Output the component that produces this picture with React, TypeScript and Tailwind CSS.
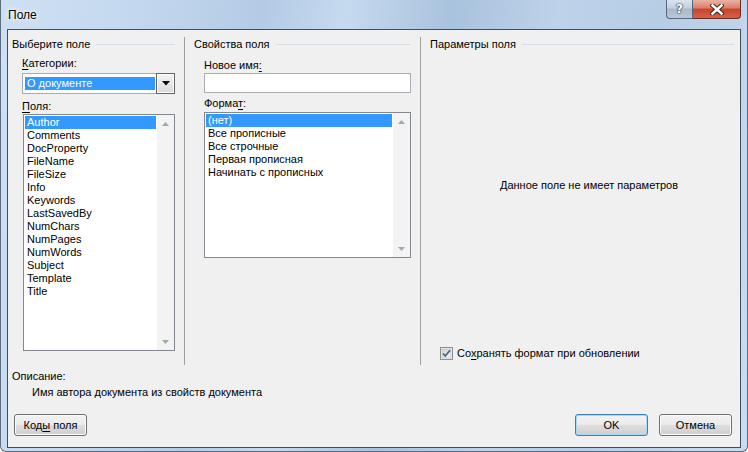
import React from "react";

function Arrow({ up, color = "#a7a7a7" }: { up: boolean; color?: string }) {
  return (
    <svg width="7" height="4" viewBox="0 0 7 4">
      <path d={up ? "M0 4 L3.5 0 L7 4Z" : "M0 0 L7 0 L3.5 4Z"} fill={color} />
    </svg>
  );
}

function Scrollbar() {
  return (
    <div className="flex w-[17px] flex-col bg-[#f3f3f3]">
      <div className="flex h-[17px] items-center justify-center">
        <Arrow up />
      </div>
      <div className="flex-1" />
      <div className="flex h-[17px] items-center justify-center">
        <Arrow up={false} />
      </div>
    </div>
  );
}

function Items({ items }: { items: string[] }) {
  return (
    <div className="flex-1 pl-[1px] pr-[1px] pt-[1px]">
      {items.map((t, i) => (
        <div
          key={t}
          className={
            i === 0
              ? "h-[13px] whitespace-nowrap bg-[#3399ff] pl-[2px] leading-[13px] text-white"
              : "h-[13px] whitespace-nowrap pl-[2px] leading-[13px] text-black"
          }
        >
          {t}
        </div>
      ))}
    </div>
  );
}

function GroupHeader({ title }: { title: string }) {
  return (
    <div className="flex h-[15px] items-center">
      <span className="whitespace-nowrap leading-[15px]">{title}</span>
      <div className="ml-[6px] h-px flex-1 bg-[#d5dfe5]" />
    </div>
  );
}

function Button({ children, def = false, extra = "" }: { children: React.ReactNode; def?: boolean; extra?: string }) {
  return (
    <div
      className={
        (def
          ? "border-[#3c7fb1] shadow-[inset_0_0_0_1px_#a8daf5] "
          : "border-[#707070] shadow-[inset_0_0_0_1px_#fbfbfb] ") +
        "flex h-[22px] w-[73px] items-center justify-center rounded-[3px] border bg-[linear-gradient(#f2f2f2_0%,#ebebeb_48%,#dddddd_52%,#cfcfcf_100%)] leading-[15px] " +
        extra
      }
    >
      {children}
    </div>
  );
}

export default function App() {
  const fields = [
    "Author",
    "Comments",
    "DocProperty",
    "FileName",
    "FileSize",
    "Info",
    "Keywords",
    "LastSavedBy",
    "NumChars",
    "NumPages",
    "NumWords",
    "Subject",
    "Template",
    "Title",
  ];
  const formats = ["(нет)", "Все прописные", "Все строчные", "Первая прописная", "Начинать с прописных"];

  return (
    <div className="flex h-[452px] w-[748px] flex-col overflow-hidden rounded-b-[6px] border-x border-b border-[#5d6d80] bg-[linear-gradient(100deg,#cfe0f3_0%,#c2d7ee_18%,#b3cbe5_32%,#c6daef_42%,#a9c2dd_55%,#bed3ea_68%,#b6cde6_80%,#c9dcf0_100%)] font-['Liberation_Sans',Arial,sans-serif] text-[11px] text-black">
      {/* Title bar */}
      <div className="flex h-[29px] items-start justify-between">
        <div className="pl-[7px] pt-[7px] text-[12px] leading-[16px] [text-shadow:0_0_6px_#ffffff,0_0_3px_#ffffff]">
          Поле
        </div>
        <div className="mr-[6px] flex">
          <div className="flex h-[19px] w-[27px] items-center justify-center rounded-bl-[4px] border border-t-0 border-[#57667a] bg-[linear-gradient(#dbe4ee_0%,#c3d0de_45%,#a9b9ca_50%,#b9c9d9_100%)] font-['DejaVu_Sans',sans-serif] text-[12px] font-bold leading-none text-white [text-shadow:0_0_1px_#2d3a4a,0_0_1px_#2d3a4a,0_0_2px_#2d3a4a]">
            ?
          </div>
          <div className="flex h-[19px] w-[48px] items-center justify-center rounded-br-[4px] border border-l-0 border-t-0 border-[#6e2a1e] bg-[linear-gradient(#eab3a6_0%,#dd7d69_45%,#c8452e_50%,#d5614a_100%)]">
            <svg width="14" height="11" viewBox="0 0 14 11">
              <path d="M2.5 1.5 L11.5 9.5 M11.5 1.5 L2.5 9.5" stroke="#3b1a14" strokeWidth="4.4" strokeLinecap="square" />
              <path d="M2.5 1.5 L11.5 9.5 M11.5 1.5 L2.5 9.5" stroke="#ffffff" strokeWidth="2.6" strokeLinecap="square" />
            </svg>
          </div>
        </div>
      </div>

      {/* Client area */}
      <div className="mx-[6px] flex h-[419px] flex-col border border-[#3e4f63] bg-[#f0f0f0]">
        <div className="mt-[7px] flex h-[328px]">
          {/* Column 1 */}
          <div className="flex w-[176px] flex-col pl-[4px] pr-[9px]">
            <GroupHeader title="Выберите поле" />
            <div className="ml-[10px] mt-[4px] leading-[15px]">
              <span className="underline underline-offset-2">К</span>атегории:
            </div>
            <div className="ml-[10px] mt-[2px] flex h-[21px] w-[153px] border border-[#a5acb5] bg-white">
              <div className="flex-1 pl-[2px] pr-[1px] pt-[3px]">
                <div className="h-[13px] border border-dotted border-[#c8782e] bg-[#3399ff] pl-[1px] leading-[11px] text-white">
                  О документе
                </div>
              </div>
              <div className="-mr-px -mt-px flex h-[21px] w-[19px] items-center justify-center border border-[#646464] bg-[linear-gradient(#f4f4f4,#d9d9d9)] shadow-[inset_0_0_0_1px_#ffffff]">
                <svg width="8" height="5" viewBox="0 0 8 5">
                  <path d="M0 0 L8 0 L4 4.5Z" fill="#000" />
                </svg>
              </div>
            </div>
            <div className="ml-[10px] mt-[5px] leading-[15px]">
              <span className="underline underline-offset-2">П</span>оля:
            </div>
            <div className="ml-[11px] flex h-[237px] w-[152px] border border-[#828790] bg-white">
              <Items items={fields} />
              <Scrollbar />
            </div>
          </div>
          <div className="w-px bg-[#a0a0a0]" />

          {/* Column 2 */}
          <div className="flex w-[235px] flex-col pl-[9px] pr-[9px]">
            <GroupHeader title="Свойства поля" />
            <div className="ml-[10px] mt-[6px] leading-[15px]">
              Новое имя<span className="underline underline-offset-2">:</span>
            </div>
            <div className="ml-[10px] h-[20px] w-[207px] border border-[#abadb3] bg-white" />
            <div className="ml-[10px] mt-[3px] leading-[15px]">
              Форма<span className="underline underline-offset-2">т</span>:
            </div>
            <div className="ml-[10px] mt-[1px] flex h-[146px] w-[207px] border border-[#828790] bg-white">
              <Items items={formats} />
              <Scrollbar />
            </div>
          </div>
          <div className="w-px bg-[#a0a0a0]" />

          {/* Column 3 */}
          <div className="flex flex-1 flex-col pl-[9px] pr-[6px]">
            <GroupHeader title="Параметры поля" />
            <div className="ml-[14px] mt-[126px] text-center leading-[15px]">Данное поле не имеет параметров</div>
            <div className="mb-[4px] ml-[10px] mt-auto flex h-[15px] items-center">
              <svg width="13" height="13" viewBox="0 0 13 13">
                <defs>
                  <linearGradient id="cb" x1="0" y1="0" x2="1" y2="1">
                    <stop offset="0" stopColor="#d3d3d3" />
                    <stop offset="1" stopColor="#f7f7f7" />
                  </linearGradient>
                </defs>
                <rect x="0.5" y="0.5" width="12" height="12" fill="#f4f4f4" stroke="#8e8f8f" />
                <rect x="2" y="2" width="9" height="9" fill="url(#cb)" stroke="#b9b9b9" strokeWidth="0.6" />
                <path d="M3 6.5 L5.3 9 L10 3.3" fill="none" stroke="#4a5f98" strokeWidth="1.8" />
              </svg>
              <span className="ml-[4px] whitespace-nowrap leading-[15px]">
                Со<span className="underline underline-offset-2">х</span>ранять формат при обновлении
              </span>
            </div>
          </div>
        </div>

        {/* Description */}
        <div className="mt-[4px] pl-[4px] leading-[15px]">Описание:</div>
        <div className="mt-[1px] pl-[24px] leading-[15px]">Имя автора документа из свойств документа</div>

        {/* Buttons */}
        <div className="mt-[14px] flex">
          <Button extra="ml-[6px]">
            <span>
              Код<span className="underline underline-offset-2">ы</span> поля
            </span>
          </Button>
          <div className="flex-1" />
          <Button def>OK</Button>
          <Button extra="ml-[11px] mr-[8px]">Отмена</Button>
        </div>
      </div>
    </div>
  );
}
